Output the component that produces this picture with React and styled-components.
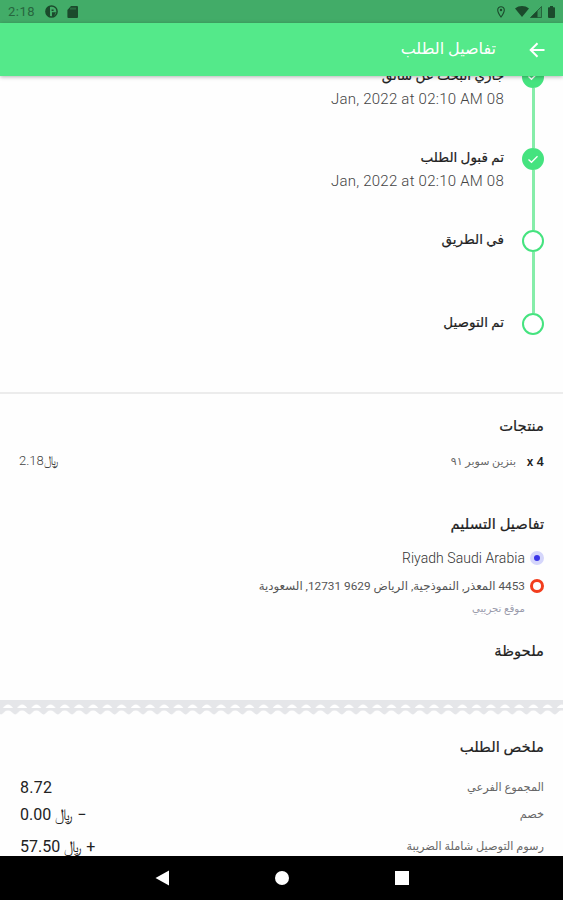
import React from "react";
import styled, { createGlobalStyle } from "styled-components";

const steps = [
  { title: "جاري البحث عن سائق", date: "Jan, 2022 at 02:10 AM 08", done: true },
  { title: "تم قبول الطلب", date: "Jan, 2022 at 02:10 AM 08", done: true },
  { title: "في الطريق", done: false },
  { title: "تم التوصيل", done: false },
];

const summary = [
  { label: "المجموع الفرعي", value: "8.72", height: 28 },
  { label: "خصم", value: "0.00 ﷼ −", height: 27 },
  { label: "رسوم التوصيل شاملة الضريبة", value: "57.50 ﷼ +", height: 36 },
];

function StatusBar() {
  return (
    <Status>
      <StatusGroup>
        <Clock>2:18</Clock>
        <svg width="13" height="13" viewBox="0 0 13 13">
          <circle cx="6.5" cy="6.5" r="5.6" fill="none" stroke="#1b4a2c" strokeWidth="1.5" />
          <path d="M1 6.5A5.5 5.5 0 0 1 5 1.2V11.8A5.5 5.5 0 0 1 1 6.5Z" fill="#1b4a2c" />
          <path d="M5 3h5.2v4.2H7v3.2H5Z" fill="#42ac68" />
          <path d="M6.6 4.6h2v1.4h-2ZM7 7.2h4L9 11 7 11.800Z" fill="#1b4a2c" />
        </svg>
        <svg width="11" height="12" viewBox="0 0 11 12">
          <path d="M4 0h6a1 1 0 0 1 1 1v10a1 1 0 0 1-1 1H1.4a1 1 0 0 1-1-1V4Z" fill="#1b4a2c" />
          <path d="M4 1.6v2M6 1.6v2M8 1.6v2" stroke="#42ac68" strokeWidth="0.7" />
        </svg>
      </StatusGroup>
      <StatusGroup>
        <PinIcon width="8" height="12" viewBox="0 0 8 12">
          <path
            d="M4 .7A3.2 3.2 0 0 0 .7 4C.7 6.6 4 11 4 11s3.3-4.4 3.3-7A3.2 3.2 0 0 0 4 .7Z"
            fill="none"
            stroke="#1b4a2c"
            strokeWidth="1.1"
          />
          <circle cx="4" cy="4" r="1.2" fill="#1b4a2c" />
        </PinIcon>
        <svg width="14" height="11" viewBox="0 0 14 11">
          <path d="M0 2.5C4 -.8 10 -.8 14 2.5L7 11Z" fill="#1b4a2c" />
        </svg>
        <svg width="12" height="12" viewBox="0 0 12 12">
          <path d="M11.5.5V11.5H.5Z" fill="#1b4a2c" fillOpacity="0.25" />
          <path d="M7.5 4.5V11.5H.5Z" fill="#1b4a2c" />
          <path d="M.5 11.5 11.5.5V11.5Z" fill="none" stroke="#1b4a2c" strokeWidth="0.7" />
        </svg>
        <BatteryIcon width="7" height="12" viewBox="0 0 7 12">
          <path
            d="M2 0h3v1.3h1.2a.8.8 0 0 1 .8.8v9a.8.8 0 0 1-.8.8H.8a.8.8 0 0 1-.8-.8v-9a.8.8 0 0 1 .8-.8H2Z"
            fill="#1b4a2c"
          />
        </BatteryIcon>
      </StatusGroup>
    </Status>
  );
}

function Timeline() {
  return (
    <Steps>
      {steps.map((step, i) => (
        <Step key={i}>
          <Rail>
            <Dot $done={step.done}>
              {step.done && (
                <svg width="12" height="9" viewBox="0 0 12 9">
                  <path d="M1.5 4.5 4.5 7.3 10.5 1.3" fill="none" stroke="#fff" strokeWidth="1.3" />
                </svg>
              )}
            </Dot>
            {i < steps.length - 1 && <Line />}
          </Rail>
          <StepText>
            <StepTitle>{step.title}</StepTitle>
            {step.date && <StepDate>{step.date}</StepDate>}
          </StepText>
        </Step>
      ))}
    </Steps>
  );
}

function TornEdge() {
  return (
    <Edge width="563" height="16" viewBox="0 0 563 16">
      <defs>
        <pattern id="scallop" x="8" width="14.2" height="16" patternUnits="userSpaceOnUse">
          <path d="M0 0H14.2V10.5L12 10.800 9 13.500Q7.500 15 6 14L2 10.800 0 10.500Z" fill="#e5e6e9" />
          <path d="M-5 8C-2 3.300 2 3.300 5 8ZM9.200 8C12.200 3.300 16.200 3.300 19.200 8Z" fill="#fff" />
        </pattern>
      </defs>
      <rect width="563" height="16" fill="url(#scallop)" />
    </Edge>
  );
}

function App() {
  return (
    <Screen dir="rtl">
      <GlobalStyle />
      <StatusBar />
      <AppBar>
        <svg width="16" height="16" viewBox="0 0 16 16">
          <path d="M15.5 8H2M8.5 1.2 1.7 8l6.8 6.8" fill="none" stroke="#fff" strokeWidth="2" />
        </svg>
        <BarTitle>تفاصيل الطلب</BarTitle>
      </AppBar>
      <Content>
        <Timeline />
        <Products>
          <Heading>منتجات</Heading>
          <ProductRow>
            <Quantity>x 4</Quantity>
            <ProductName>بنزين سوبر ٩١</ProductName>
            <Price>2.18﷼</Price>
          </ProductRow>
        </Products>
        <Delivery>
          <Heading>تفاصيل التسليم</Heading>
          <Place>
            <OriginMark />
            <City>Riyadh Saudi Arabia</City>
          </Place>
          <Place>
            <TargetMark />
            <Address>4453 المعذر, النموذجية, الرياض 9629 12731, السعودية</Address>
          </Place>
          <PlaceNote>موقع تجريبي</PlaceNote>
        </Delivery>
        <Note>
          <Heading>ملحوظة</Heading>
        </Note>
        <TornEdge />
        <Summary>
          <Heading>ملخص الطلب</Heading>
          <SummaryList>
            {summary.map((row) => (
              <SummaryRow key={row.label} $height={row.height}>
                <SummaryLabel>{row.label}</SummaryLabel>
                <Amount>{row.value}</Amount>
              </SummaryRow>
            ))}
          </SummaryList>
        </Summary>
      </Content>
      <NavBar>
        <svg width="14" height="16" viewBox="0 0 14 16">
          <path d="M.5 8 14 .5v15Z" fill="#fff" />
        </svg>
        <HomeButton />
        <RecentButton />
      </NavBar>
    </Screen>
  );
}

const GlobalStyle = createGlobalStyle`
  * {
    box-sizing: border-box;
  }
  body {
    margin: 0;
    background: #fff;
  }
`;

const Screen = styled.div`
  width: 563px;
  height: 900px;
  display: flex;
  flex-direction: column;
  overflow: hidden;
  background: #fefefe;
  color: #222;
  font-family: Roboto, "DejaVu Sans", sans-serif;
  white-space: nowrap;
`;

const Status = styled.div`
  direction: ltr;
  height: 23px;
  flex-shrink: 0;
  display: flex;
  align-items: center;
  justify-content: space-between;
  padding: 0 8px 0 8px;
  background: #42ac68;
`;

const StatusGroup = styled.div`
  display: flex;
  align-items: center;
`;

const Clock = styled.span`
  width: 37px;
  font-size: 13px;
  letter-spacing: 0.5px;
  color: #27663e;
  & + svg {
    margin-right: 9px;
  }
`;

const PinIcon = styled.svg`
  margin-right: 10px;
  & + svg {
    margin-right: 1px;
  }
`;

const BatteryIcon = styled.svg`
  margin-left: 6px;
`;

const AppBar = styled.header`
  position: relative;
  z-index: 1;
  height: 53px;
  flex-shrink: 0;
  display: flex;
  align-items: center;
  gap: 33px;
  padding-right: 18px;
  background: #54e98a;
  box-shadow: 0 1px 4px rgba(0, 0, 0, 0.3);
`;

const BarTitle = styled.h1`
  margin: 0 0 3px;
  font-size: 16px;
  font-weight: 400;
  color: #fff;
`;

const Content = styled.main`
  flex: 1;
  min-height: 0;
  overflow: hidden;
`;

const Steps = styled.div`
  height: 316px;
  margin-top: -10.3px;
  margin-bottom: 10.3px;
  padding-right: 19px;
`;

const Step = styled.div`
  height: 82.4px;
  display: flex;
  gap: 18px;
`;

const Rail = styled.div`
  width: 22px;
  display: flex;
  flex-direction: column;
  align-items: center;
`;

const Dot = styled.div`
  width: 22px;
  height: 22px;
  flex-shrink: 0;
  display: flex;
  align-items: center;
  justify-content: center;
  border: 2px solid #45e37f;
  border-radius: 50%;
  background: ${(props) => (props.$done ? "#45e37f" : "#fff")};
`;

const Line = styled.div`
  width: 3px;
  flex: 1;
  background: #86eda9;
`;

const StepText = styled.div`
  display: flex;
  flex-direction: column;
  align-items: flex-start;
`;

const StepTitle = styled.div`
  height: 24px;
  line-height: 18px;
  font-size: 13.5px;
  -webkit-text-stroke: 0.2px #222;
`;

const StepDate = styled.div`
  direction: ltr;
  line-height: 18px;
  font-size: 15px;
  font-weight: 300;
  letter-spacing: 0.24px;
  color: #444;
`;

const Heading = styled.h2`
  margin: 0;
  line-height: 20px;
  font-size: 14.8px;
  font-weight: 400;
  -webkit-text-stroke: 0.2px #222;
`;

const Products = styled.section`
  height: 120px;
  padding: 22px 19px 0;
  border-top: 2px solid #ececec;
`;

const ProductRow = styled.div`
  display: flex;
  align-items: center;
  height: 20px;
  margin-top: 15px;
`;

const Quantity = styled.span`
  direction: ltr;
  width: 28px;
  text-align: right;
  font-size: 13px;
  font-weight: 500;
`;

const ProductName = styled.span`
  font-size: 11px;
  color: #666;
`;

const Price = styled.span`
  direction: ltr;
  margin-right: auto;
  font-size: 13px;
  font-weight: 300;
  color: #444;
`;

const Delivery = styled.section`
  height: 128px;
  padding: 2px 19px 0;
`;

const Place = styled.div`
  height: 28px;
  display: flex;
  align-items: center;
  gap: 5px;
  &:first-of-type {
    margin-top: 10px;
  }
`;

const OriginMark = styled.span`
  width: 14px;
  height: 14px;
  border: 4px solid #d5d6fb;
  border-radius: 50%;
  background: #3a35e8;
`;

const TargetMark = styled.span`
  width: 14px;
  height: 14px;
  border: 3.5px solid #f23d1d;
  border-radius: 50%;
`;

const City = styled.span`
  direction: ltr;
  font-size: 14px;
  font-weight: 300;
  letter-spacing: 0.06px;
  color: #333;
`;

const Address = styled.span`
  font-size: 11.8px;
  color: #555;
`;

const PlaceNote = styled.div`
  margin-right: 19px;
  line-height: 18px;
  font-size: 10.2px;
  color: #999aab;
`;

const Note = styled.section`
  height: 60px;
  padding: 1px 19px 0;
`;

const Edge = styled.svg`
  display: block;
`;

const Summary = styled.section`
  padding: 21px 19px 0 20px;
`;

const SummaryList = styled.div`
  margin-top: 16px;
`;

const SummaryRow = styled.div`
  height: ${(props) => props.$height}px;
  display: flex;
  align-items: center;
  justify-content: space-between;
`;

const SummaryLabel = styled.span`
  font-size: 11.3px;
  color: #666;
`;

const Amount = styled.span`
  direction: ltr;
  font-size: 16px;
  letter-spacing: 0.3px;
`;

const NavBar = styled.nav`
  direction: ltr;
  height: 44px;
  flex-shrink: 0;
  display: flex;
  align-items: center;
  justify-content: center;
  gap: 106px;
  background: #000;
`;

const HomeButton = styled.div`
  width: 14px;
  height: 14px;
  border-radius: 50%;
  background: #fff;
`;

const RecentButton = styled.div`
  width: 14px;
  height: 14px;
  background: #fff;
`;

export default App;
